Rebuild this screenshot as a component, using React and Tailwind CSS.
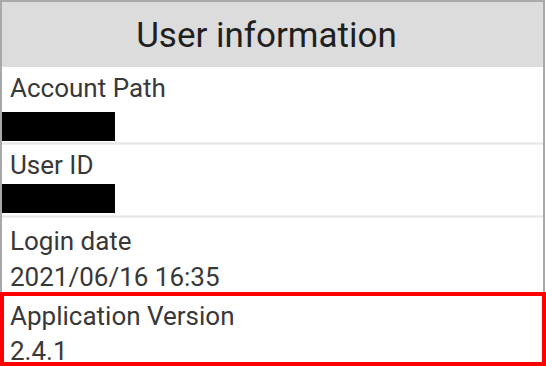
const Redacted = () => (
  <div className="-ml-[8px] h-[29px] w-[113px] bg-black" />
);

const Row = ({ label, value, extra = "" }) => (
  <div className={`flex flex-col px-[8px] ${extra}`}>
    <p className="text-[26px] leading-[30px] text-[#383838]">{label}</p>
    {value}
  </div>
);

const Divider = () => (
  <div className="h-[3px] bg-gradient-to-b from-[#f4f4f4] via-[#e6e6e6] to-[#f4f4f4]" />
);

export default function App() {
  return (
    <div
      className="h-[366px] w-[546px] overflow-hidden bg-white"
      style={{ fontFamily: "Roboto, 'Liberation Sans', sans-serif" }}
    >
      <div className="w-[545px] border-l-2 border-r-2 border-t-2 border-[#a9a9a9]">
        <div className="flex h-[65px] items-center justify-center bg-[#dcdcdd] pr-[12px] pt-[1px]">
          <h1 className="text-[35px] leading-none text-[#1f1f1f]">
            User information
          </h1>
        </div>

        <Row
          label="Account Path"
          extra="h-[75px] pt-[6px] gap-[9px]"
          value={<Redacted />}
        />
        <Divider />
        <Row
          label="User ID"
          extra="h-[70px] pt-[5px] gap-[4px]"
          value={<Redacted />}
        />
        <Divider />
        <Row
          label="Login date"
          extra="h-[74px] pt-[8px] gap-[6px]"
          value={
            <p className="text-[26px] leading-[30px] text-[#383838]">
              2021/06/16 16:35
            </p>
          }
        />
      </div>

      <div className="flex h-[74px] w-[546px] flex-col gap-[5px] border-4 border-[#ff0000] px-[6px] pt-[5px]">
        <p className="text-[26px] leading-[30px] text-[#383838]">
          Application Version
        </p>
        <p className="text-[26px] leading-[30px] text-[#383838]">2.4.1</p>
      </div>
    </div>
  );
}
